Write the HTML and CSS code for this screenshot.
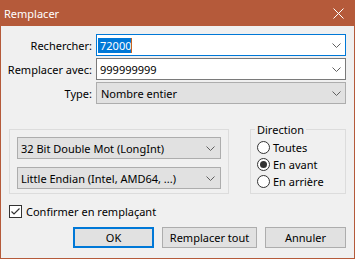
FILE: index.html
```html
<!DOCTYPE html>
<html lang="fr">
<head>
    <meta charset="UTF-8">
    <meta name="viewport" content="width=device-width, initial-scale=1.0">
    <title>Remplacer</title>
    <link rel="stylesheet" href="styles.css">
</head>
<body>
    <div class="window">
        <div class="titlebar">
            <span class="title">Remplacer</span>
            <svg class="close" width="11" height="11" viewBox="0 0 11 11">
                <path d="M0.5 0.5 L10.5 10.5 M10.5 0.5 L0.5 10.5" stroke="#fff" stroke-width="1" fill="none"/>
            </svg>
        </div>

        <div class="content">
            <!-- champs de recherche -->
            <div class="fields">
                <label>Rechercher:</label>
                <div class="combo edit active">
                    <span class="value"><span class="selected">72000</span><span class="caret"></span></span>
                    <svg class="chevron" width="9" height="5" viewBox="0 0 9 5"><path d="M0.5 0.5 L4.5 4.5 L8.5 0.5" stroke="#606060" fill="none"/></svg>
                </div>

                <label>Remplacer avec:</label>
                <div class="combo edit">
                    <span class="value">999999999</span>
                    <svg class="chevron" width="9" height="5" viewBox="0 0 9 5"><path d="M0.5 0.5 L4.5 4.5 L8.5 0.5" stroke="#606060" fill="none"/></svg>
                </div>

                <label>Type:</label>
                <div class="combo list type">
                    <span>Nombre entier</span>
                    <svg class="chevron" width="9" height="5" viewBox="0 0 9 5"><path d="M0.5 0.5 L4.5 4.5 L8.5 0.5" stroke="#606060" fill="none"/></svg>
                </div>
            </div>

            <!-- format et direction -->
            <div class="groups">
                <fieldset class="group format">
                    <div class="combo list small">
                        <span>32 Bit Double Mot (LongInt)</span>
                        <svg class="chevron" width="9" height="5" viewBox="0 0 9 5"><path d="M0.5 0.5 L4.5 4.5 L8.5 0.5" stroke="#606060" fill="none"/></svg>
                    </div>
                    <div class="combo list small">
                        <span>Little Endian (Intel, AMD64, ...)</span>
                        <svg class="chevron" width="9" height="5" viewBox="0 0 9 5"><path d="M0.5 0.5 L4.5 4.5 L8.5 0.5" stroke="#606060" fill="none"/></svg>
                    </div>
                </fieldset>

                <fieldset class="group direction">
                    <legend>Direction</legend>
                    <div class="radio"><span class="circle"></span>Toutes</div>
                    <div class="radio"><span class="circle checked"></span>En avant</div>
                    <div class="radio"><span class="circle"></span>En arrière</div>
                </fieldset>
            </div>

            <div class="confirm">
                <span class="checkbox">
                    <svg width="11" height="11" viewBox="0 0 11 11"><path d="M1.5 5.5 L4 8 L9.5 2.5" stroke="#333" stroke-width="1.2" fill="none"/></svg>
                </span>
                Confirmer en remplaçant
            </div>

            <div class="buttons">
                <button class="btn ok">OK</button>
                <button class="btn all">Remplacer tout</button>
                <button class="btn cancel">Annuler</button>
            </div>
        </div>
    </div>
</body>
</html>
```

FILE: styles.css
```css
body {
    margin: 0;
    font-family: "Noto Sans", sans-serif;
    font-size: 11px;
    line-height: 15px;
    color: #000;
}
.window {
    width: 355px;
    height: 259px;
    box-sizing: border-box;
    border: 1px solid #b55a3a;
    border-top: none;
    background: #f0f0f0;
}
.titlebar {
    height: 26px;
    background: #b55a3a;
    display: flex;
    align-items: center;
    justify-content: space-between;
    padding-left: 3px;
    padding-right: 10px;
    color: white;
}
.close {
    display: block;
}
.content {
    padding: 8px 8px 0 8px;
}
.fields {
    display: grid;
    grid-template-columns: 87px 250px;
    column-gap: 4px;
    row-gap: 2px;
    margin-left: -4px;
}
.fields label {
    text-align: right;
    white-space: nowrap;
    align-self: center;
}
.combo {
    height: 22px;
    box-sizing: border-box;
    display: flex;
    align-items: center;
    justify-content: space-between;
    padding-right: 4px;
    white-space: nowrap;
}
.chevron {
    display: block;
}
.edit {
    background: #fff;
    border: 1px solid #7a7a7a;
    padding-left: 1px;
}
.edit .value {
    padding-left: 2px;
}
.active {
    border-color: #0078d7;
}
.active .value {
    padding-left: 0;
    display: flex;
    align-items: center;
}
.selected {
    background: #0078d7;
    color: #fff;
    padding-left: 2px;
}
.caret {
    width: 1px;
    height: 15px;
    background: #c8641e;
}
.list {
    background: #e1e1e1;
    border: 1px solid #adadad;
}
.type {
    padding-left: 4px;
}
.small {
    padding-left: 3px;
    padding-right: 5px;
}
.groups {
    display: flex;
    justify-content: space-between;
    align-items: flex-end;
    margin-top: 18px;
}
.group {
    margin: 0;
    min-width: 0;
    border: 1px solid #dcdcdc;
    box-sizing: border-box;
}
.format {
    width: 220px;
    padding: 7px 7px 4px 7px;
    display: flex;
    flex-direction: column;
    gap: 8px;
}
.direction {
    width: 96px;
    padding: 2px 4px 3px 6px;
}
.direction legend {
    padding: 0 2px;
    margin-left: -2px;
    line-height: 15px;
}
.radio {
    height: 17px;
    display: flex;
    align-items: center;
    gap: 3px;
}
.circle {
    width: 13px;
    height: 13px;
    box-sizing: border-box;
    border: 1px solid #333;
    border-radius: 50%;
    background: #fff;
    display: flex;
    align-items: center;
    justify-content: center;
}
.checked::after {
    content: "";
    width: 7px;
    height: 7px;
    border-radius: 50%;
    background: #333;
}
.confirm {
    margin-top: 10px;
    height: 15px;
    display: flex;
    align-items: center;
    gap: 4px;
}
.checkbox {
    width: 13px;
    height: 13px;
    box-sizing: border-box;
    border: 1px solid #333;
    background: #fff;
}
.checkbox svg {
    display: block;
}
.buttons {
    margin-top: 8px;
    display: flex;
    justify-content: flex-end;
    gap: 8px;
}
.btn {
    height: 21px;
    box-sizing: border-box;
    padding: 0;
    font-family: inherit;
    font-size: 11px;
    color: #000;
    background: #e1e1e1;
    border: 1px solid #adadad;
}
.ok {
    width: 81px;
    border: 2px solid #0078d7;
}
.all {
    width: 95px;
}
.cancel {
    width: 81px;
}
```
